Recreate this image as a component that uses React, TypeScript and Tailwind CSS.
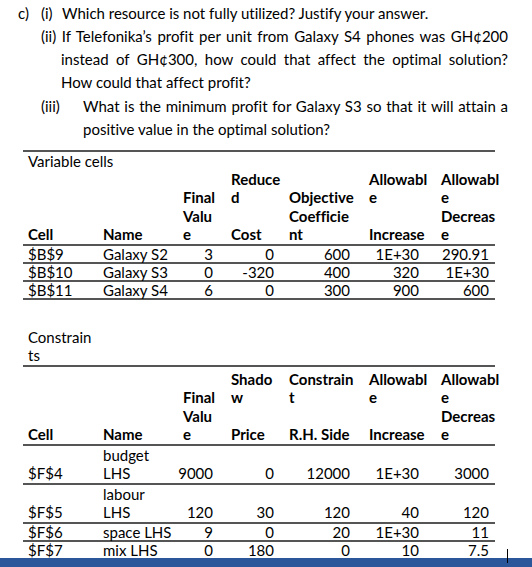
import React from 'react';

const COLS = ['w-[75px]', 'w-[80px]', 'w-[48px]', 'w-[58px]', 'w-[80px]', 'w-[72px]', 'w-[59px]'];
const NUM_PAD = ['', '', 'pr-[13px]', 'pr-[10px]', 'pr-[14px]', 'pr-[17px]', 'pr-[6px]'];
const LINE_H = ['h-[18px] leading-[18px]', 'h-[19px] leading-[19px]'];

const varHeader: string[][] = [
  ['', '', '', 'Cell'],
  ['', '', '', 'Name'],
  ['', 'Final', 'Valu', 'e'],
  ['Reduce', 'd', '', 'Cost'],
  ['', 'Objective', 'Coefficie', 'nt'],
  ['Allowabl', 'e', '', 'Increase'],
  ['Allowabl', 'e', 'Decreas', 'e'],
];

const conHeader: string[][] = [
  ['', '', '', 'Cell'],
  ['', '', '', 'Name'],
  ['', 'Final', 'Valu', 'e'],
  ['Shado', 'w', '', 'Price'],
  ['Constrain', 't', '', 'R.H. Side'],
  ['Allowabl', 'e', '', 'Increase'],
  ['Allowabl', 'e', 'Decreas', 'e'],
];

const varRows: string[][][] = [
  [['$B$9'], ['Galaxy S2'], ['3'], ['0'], ['600'], ['1E+30'], ['290.91']],
  [['$B$10'], ['Galaxy S3'], ['0'], ['-320'], ['400'], ['320'], ['1E+30']],
  [['$B$11'], ['Galaxy S4'], ['6'], ['0'], ['300'], ['900'], ['600']],
];

const conRows: string[][][] = [
  [['$F$4'], ['budget', 'LHS'], ['9000'], ['0'], ['12000'], ['1E+30'], ['3000']],
  [['$F$5'], ['labour', 'LHS'], ['120'], ['30'], ['120'], ['40'], ['120']],
  [['$F$6'], ['space LHS'], ['9'], ['0'], ['20'], ['1E+30'], ['11']],
  [['$F$7'], ['mix LHS'], ['0'], ['180'], ['0'], ['10'], ['7.5']],
];

// stacked lines, sized from the bottom up
const Lines = ({ lines, single }: { lines: string[]; single?: boolean }) => (
  <>
    {lines.map((l, j) => {
      const fromBottom = lines.length - 1 - j;
      const cls = single ? 'h-[16px] leading-[16px]' : LINE_H[fromBottom % 2 === 0 ? 1 : 0];
      return (
        <div key={j} className={`whitespace-nowrap ${cls}`}>
          {l || '\u00a0'}
        </div>
      );
    })}
  </>
);

const ColGroup = () => (
  <colgroup>
    {COLS.map((c, i) => (
      <col key={i} className={c} />
    ))}
  </colgroup>
);

const HeaderRow = ({ cols, top }: { cols: string[][]; top?: string }) => (
  <tr className="border-b-2 border-[#555555] font-bold">
    {cols.map((lines, i) => (
      <td key={i} className={`p-0 pl-[5px] align-bottom ${top || ''}`}>
        <Lines lines={lines} />
      </td>
    ))}
  </tr>
);

const DataRow = ({ cells, last }: { cells: string[][]; last?: boolean }) => {
  const tall = cells.some((c) => c.length > 1);
  return (
    <tr className={last ? '' : 'border-b-2 border-[#555555]'}>
      {cells.map((lines, i) => (
        <td
          key={i}
          className={`p-0 align-bottom ${tall ? 'h-[37px]' : ''} ${i < 2 ? 'pl-[5px] text-left' : `text-right ${NUM_PAD[i]}`}`}
        >
          <Lines lines={lines} single={!tall} />
        </td>
      ))}
    </tr>
  );
};

export default function App() {
  return (
    <div className="relative h-[567px] w-[532px] overflow-hidden bg-white text-black font-['Lato','Liberation_Sans',sans-serif] text-[15px] [font-variant-ligatures:none]">
      {/* Questions */}
      <div className="pt-[2px] leading-[23px]">
        <div className="flex pl-[18px]">
          <span className="w-[23px]">c)</span>
          <span className="w-[21px]">(i)</span>
          <span>Which resource is not fully utilized? Justify your answer.</span>
        </div>
        <div className="pl-[41px]">
          <div className="w-[467px] text-justify [text-align-last:justify] whitespace-nowrap">
            (ii) If Telefonika’s profit per unit from Galaxy S4 phones was GH¢200
          </div>
        </div>
        <div className="pl-[61px]">
          <div className="w-[447px] text-justify [text-align-last:justify]">
            instead of GH¢300, how could that affect the optimal solution?
          </div>
          <div>How could that affect profit?</div>
        </div>
        <div className="flex pl-[41px] mt-[1px]">
          <span className="w-[42px] shrink-0">(iii)</span>
          <div className="w-[425px] text-justify [text-align-last:justify]">
            What is the minimum profit for Galaxy S3 so that it will attain a
          </div>
        </div>
        <div className="pl-[83px] leading-[22px]">positive value in the optimal solution?</div>
      </div>

      {/* Variable cells */}
      <table className="ml-[23px] mt-[10px] w-[472px] table-fixed border-collapse">
        <ColGroup />
        <tbody>
          <tr className="border-t-2 border-[#555555]">
            <td colSpan={7} className="p-0 pl-[5px] h-[19px] leading-[18px] align-top">
              Variable cells
            </td>
          </tr>
          <HeaderRow cols={varHeader} />
          {varRows.map((r, i) => (
            <DataRow key={i} cells={r} />
          ))}
        </tbody>
      </table>

      {/* Constraints */}
      <table className="ml-[23px] mt-[28px] w-[472px] table-fixed border-collapse">
        <ColGroup />
        <tbody>
          <tr className="border-b-2 border-[#555555]">
            <td className="p-0 pl-[5px] align-bottom">
              <Lines lines={['Constrain', 'ts']} />
            </td>
            <td colSpan={6} className="p-0" />
          </tr>
          <HeaderRow cols={conHeader} top="pt-[3px]" />
          {conRows.map((r, i) => (
            <DataRow key={i} cells={r} last={i === conRows.length - 1} />
          ))}
        </tbody>
      </table>

      <div className="absolute left-0 right-0 bottom-0 h-[9px] bg-[#2b579a]" />
      <div className="absolute left-[507px] top-[549px] h-[14px] w-px bg-black" />
    </div>
  );
}
